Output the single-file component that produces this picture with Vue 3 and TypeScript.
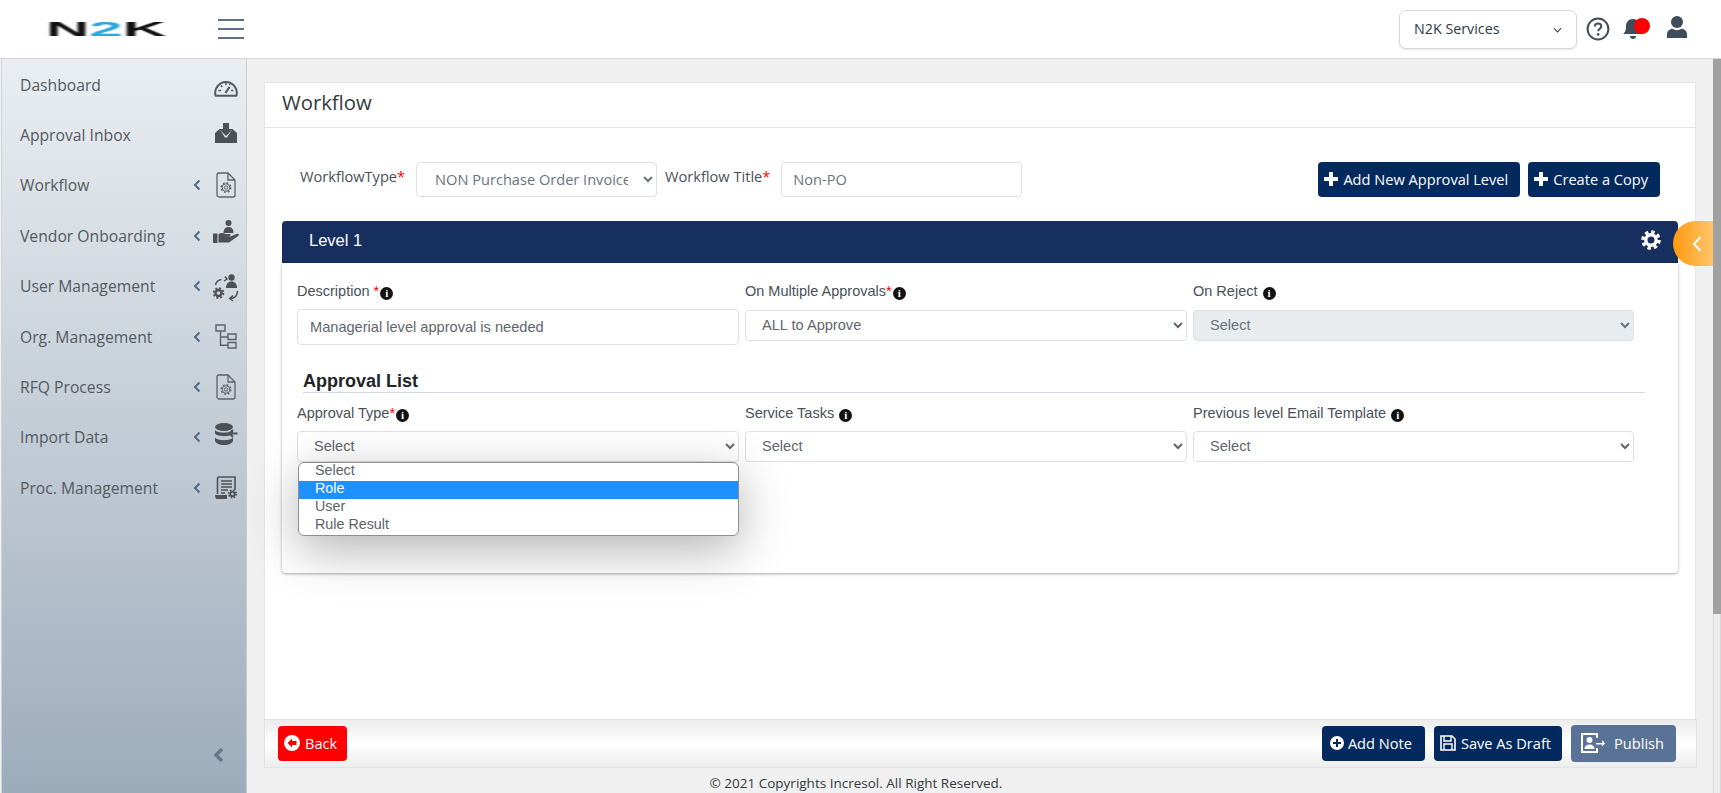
<script setup lang="ts">
interface NavItem {
  label: string
  icon: string
  arrow: boolean
}

const nav: NavItem[] = [
  { label: 'Dashboard', icon: 'gauge', arrow: false },
  { label: 'Approval Inbox', icon: 'inbox', arrow: false },
  { label: 'Workflow', icon: 'docgear', arrow: true },
  { label: 'Vendor Onboarding', icon: 'hand', arrow: true },
  { label: 'User Management', icon: 'users', arrow: true },
  { label: 'Org. Management', icon: 'tree', arrow: true },
  { label: 'RFQ Process', icon: 'docgear', arrow: true },
  { label: 'Import Data', icon: 'db', arrow: true },
  { label: 'Proc. Management', icon: 'scroll', arrow: true },
]

const approvalOptions = ['Select', 'Role', 'User', 'Rule Result']
</script>

<template>
  <div class="app">
    <header class="topbar">
      <div class="logo"><div class="logo-text"><span>N</span><span class="two">2</span><span>K</span></div></div>
      <div class="burger"><i></i><i></i><i></i></div>
      <div class="top-right">
        <div class="company-wrap">
          <select class="company">
            <option>N2K Services</option>
          </select>
          <svg class="company-chev" viewBox="0 0 10 6" width="9" height="6">
            <path d="M1 1l4 4 4-4" fill="none" stroke="#3f4c5a" stroke-width="1.300" />
          </svg>
        </div>
        <svg class="ic-help" viewBox="0 0 24 24" width="24" height="24">
          <circle cx="12" cy="12" r="10.400" fill="none" stroke="#3f4c5a" stroke-width="2" />
          <path d="M8.800 9.600c0-2 1.500-3.200 3.300-3.200s3.200 1.200 3.200 2.900c0 2.400-3.100 2.500-3.100 5" fill="none" stroke="#3f4c5a" stroke-width="2" />
          <circle cx="12.200" cy="17.400" r="1.300" fill="#3f4c5a" />
        </svg>
        <div class="bell">
          <svg viewBox="0 0 24 24" width="24" height="24">
            <path d="M12 2c-4.400 0-7 3.200-7 7.400 0 4.600-1.400 6-3 7.600h20c-1.600-1.600-3-3-3-7.600C19 5.200 16.400 2 12 2zM9 19c0 1.700 1.300 3 3 3s3-1.300 3-3z" fill="#3f4c5a" />
          </svg>
          <span class="dot"></span>
        </div>
        <svg class="ic-user" viewBox="0 0 24 24" width="24" height="24">
          <circle cx="12" cy="7" r="6" fill="#3f4c5a" />
          <path d="M2 23v-3.500C2 16 5 13.800 7.400 13.800c1.400.9 3 1.400 4.600 1.400s3.200-.5 4.600-1.400c2.400 0 5.400 2.200 5.400 5.700V23z" fill="#3f4c5a" />
        </svg>
      </div>
    </header>

    <div class="layout">
      <aside class="sidebar">
        <nav class="nav">
          <div v-for="item in nav" :key="item.label" class="nav-item">
            <span class="nav-label">{{ item.label }}</span>
            <svg v-if="item.arrow" class="nav-arrow" viewBox="0 0 8 12" width="8" height="12">
              <path d="M6.500 1.500 2 6l4.500 4.500" fill="none" stroke="#4f6a85" stroke-width="2" />
            </svg>
            <span class="nav-icon" :class="item.icon">
              <svg v-if="item.icon === 'gauge'" viewBox="0 0 24 19" width="24" height="19">
                <path d="M1.600 17.800a10.800 10.800 0 1 1 20.800 0z" fill="none" stroke="#55595e" stroke-width="2" stroke-linejoin="round" />
                <path d="M11.500 15l4-6" stroke="#55595e" stroke-width="2.200" />
                <path d="M4.500 12.500h2.500M6.800 7.500l1.600 1.400M12 4.800v2.400M17 12.500h2.500M16.200 6l-.8 1" stroke="#55595e" stroke-width="1.500" />
              </svg>
              <svg v-else-if="item.icon === 'inbox'" viewBox="0 0 22 20" width="22" height="20">
                <path d="M8 0h6v6h4l-7 7-7-7h4z" fill="#4d5156" />
                <path d="M0 10l4.500-4 5.500 8.500h2L17.500 6l4.500 4v10H0z" fill="#4d5156" />
              </svg>
              <svg v-else-if="item.icon === 'docgear'" viewBox="0 0 20 26" width="20" height="26">
                <path d="M1 3a2 2 0 0 1 2-2h9l7 7v15a2 2 0 0 1-2 2H3a2 2 0 0 1-2-2z" fill="none" stroke="#5d6167" stroke-width="1.300" />
                <path d="M12 1v7h7" fill="none" stroke="#5d6167" stroke-width="1.300" />
                <circle cx="10" cy="15.500" r="1.700" fill="none" stroke="#5d6167" stroke-width="1" />
                <circle cx="10" cy="15.500" r="3.800" fill="none" stroke="#5d6167" stroke-width="1" />
                <circle cx="10" cy="15.500" r="4.800" fill="none" stroke="#5d6167" stroke-width="1.400" stroke-dasharray="1.800 1.970" />
              </svg>
              <svg v-else-if="item.icon === 'hand'" viewBox="0 0 26 23" width="26" height="23">
                <circle cx="15.500" cy="3" r="3" fill="#4d5156" />
                <path d="M10.500 13c0-4 2-6 5-6s5 2 5 6z" fill="#4d5156" />
                <path d="M0 13.500h4.500V23H0zM5.500 14c3-1.500 5-1 7 0h4c1.500 0 1.500 2.200 0 2.200h-4l5 .2 6-2.400c2.200-.6 3 1 1.300 2.200L16 22.500H5.500z" fill="#4d5156" />
              </svg>
              <svg v-else-if="item.icon === 'users'" viewBox="0 0 26 28" width="26" height="28">
                <circle cx="18.500" cy="3.500" r="3.200" fill="#4d5156" />
                <path d="M13 14c0-4 2-6.500 5.500-6.500S24 10 24 14z" fill="#4d5156" />
                <circle cx="5.500" cy="19" r="3" fill="none" stroke="#4d5156" stroke-width="2.400" />
                <circle cx="5.500" cy="19" r="4.900" fill="none" stroke="#4d5156" stroke-width="1.800" stroke-dasharray="2 1.850" />
                <path d="M2.500 11c.6-3 2.500-5 6-5.500" fill="none" stroke="#4d5156" stroke-width="1.500" />
                <path d="M12 2.500l2 2.500-3 2" fill="none" stroke="#4d5156" stroke-width="1.500" />
                <path d="M24.500 17c0 4-2.500 7-7 7.500" fill="none" stroke="#4d5156" stroke-width="1.500" />
                <path d="M20 21.500l-3.300 3 3.300 2.500" fill="none" stroke="#4d5156" stroke-width="1.500" />
              </svg>
              <svg v-else-if="item.icon === 'tree'" viewBox="0 0 22 25" width="22" height="25">
                <path d="M1 1h9v6H1zM13 10h8v5.500h-8zM13 18.500h8V24h-8zM5.500 7v14.200H13M5.500 13H13" fill="none" stroke="#5d6167" stroke-width="1.400" />
              </svg>
              <svg v-else-if="item.icon === 'db'" viewBox="0 0 24 22" width="24" height="22">
                <ellipse cx="10" cy="4" rx="9" ry="4" fill="#4d5156" />
                <path d="M1 7c2 3.500 16 3.500 18 0v3.500c-2 3.500-16 3.500-18 0zM1 14.500c2 3.500 16 3.500 18 0V18c-2 5.500-16 5.500-18 0z" fill="#4d5156" />
                <path d="M23.500 10.500H15.500M19 7l-3.500 3.500L19 14" fill="none" stroke="#4d5156" stroke-width="1.900" />
              </svg>
              <svg v-else viewBox="0 0 24 23" width="24" height="23">
                <path d="M5 1h16v13M5 1c-1.500 0-1.500 1-1.500 2v15" fill="none" stroke="#4d5156" stroke-width="1.600" />
                <path d="M7 5h11M7 8h11M7 11h11M7 14h7M7 17h4" stroke="#4d5156" stroke-width="1.300" />
                <path d="M1 19h12v4H3c-1 0-2-1.500-2-4z" fill="#4d5156" />
                <circle cx="18.500" cy="18" r="2.200" fill="none" stroke="#4d5156" stroke-width="1.800" />
                <circle cx="18.500" cy="18" r="3.700" fill="none" stroke="#4d5156" stroke-width="1.600" stroke-dasharray="1.600 1.300" />
              </svg>
            </span>
          </div>
        </nav>
        <div class="collapse">
          <svg viewBox="0 0 12 16" width="12" height="16">
            <path d="M10 2 4 8l6 6" fill="none" stroke="#66778a" stroke-width="3.400" />
          </svg>
        </div>
      </aside>

      <main class="main">
        <section class="page">
          <h1 class="page-title">Workflow</h1>
          <div class="page-body">
            <div class="head-row">
              <label class="head-label">WorkflowType<em>*</em></label>
              <select class="ctl type-select">
                <option>NON Purchase Order Invoice</option>
              </select>
              <label class="head-label">Workflow Title<em>*</em></label>
              <input class="ctl title-input" value="Non-PO" />
              <div class="head-actions">
                <button class="btn">
                  <svg viewBox="0 0 14 14" width="14" height="14"><path d="M5 0h4v5h5v4H9v5H5V9H0V5h5z" fill="#fff" /></svg>
                  Add New Approval Level
                </button>
                <button class="btn">
                  <svg viewBox="0 0 14 14" width="14" height="14"><path d="M5 0h4v5h5v4H9v5H5V9H0V5h5z" fill="#fff" /></svg>
                  Create a Copy
                </button>
              </div>
            </div>

            <div class="level">
              <div class="level-bar">
                <span>Level 1</span>
                <svg viewBox="0 0 20 20" width="20" height="20">
                  <circle cx="10" cy="10" r="5.200" fill="none" stroke="#fff" stroke-width="3.400" />
                  <circle cx="10" cy="10" r="8" fill="none" stroke="#fff" stroke-width="3.600" stroke-dasharray="3.400 2.880" />
                </svg>
              </div>
              <div class="level-body">
                <div class="fields first">
                  <div class="field">
                    <label>Description <em>*</em><i class="info">i</i></label>
                    <input class="ctl desc" value="Managerial level approval is needed" />
                  </div>
                  <div class="field">
                    <label>On Multiple Approvals<em>*</em><i class="info">i</i></label>
                    <select class="ctl"><option>ALL to Approve</option></select>
                  </div>
                  <div class="field">
                    <label>On Reject <i class="info">i</i></label>
                    <select class="ctl" disabled><option>Select</option></select>
                  </div>
                </div>
                <h2 class="list-title">Approval List</h2>
                <div class="fields second">
                  <div class="field dropdown-host">
                    <label>Approval Type<em>*</em><i class="info">i</i></label>
                    <select class="ctl"><option>Select</option></select>
                    <ul class="dropdown">
                      <li v-for="opt in approvalOptions" :key="opt" :class="{ active: opt === 'Role' }">{{ opt }}</li>
                    </ul>
                  </div>
                  <div class="field">
                    <label>Service Tasks <i class="info">i</i></label>
                    <select class="ctl"><option>Select</option></select>
                  </div>
                  <div class="field">
                    <label>Previous level Email Template <i class="info">i</i></label>
                    <select class="ctl"><option>Select</option></select>
                  </div>
                </div>
              </div>
            </div>
          </div>
          <footer class="page-foot">
            <button class="btn back">
              <svg viewBox="0 0 16 16" width="16" height="16">
                <circle cx="8" cy="8" r="8" fill="#fff" />
                <path d="M8 3.500 3.500 8 8 12.500V10h4.500V6H8z" fill="#f00" />
              </svg>
              Back
            </button>
            <div class="foot-right">
              <button class="btn add-note">
                <svg viewBox="0 0 14 14" width="14" height="14">
                  <circle cx="7" cy="7" r="7" fill="#fff" />
                  <path d="M6 3h2v3h3v2H8v3H6V8H3V6h3z" fill="#032a5e" />
                </svg>
                Add Note
              </button>
              <button class="btn save">
                <svg viewBox="0 0 16 16" width="16" height="16">
                  <path d="M1 1h11l3 3v11H1z" fill="none" stroke="#fff" stroke-width="1.600" />
                  <path d="M4 1v5h7V1M4 15V9h8v6" fill="none" stroke="#fff" stroke-width="1.400" />
                </svg>
                Save As Draft
              </button>
              <button class="btn publish">
                <svg viewBox="0 0 24 20" width="24" height="20">
                  <path d="M16 5V1H1v18h15v-4" fill="none" stroke="#fff" stroke-width="2" />
                  <circle cx="8.500" cy="7" r="3" fill="#fff" />
                  <path d="M3.500 16c0-3 2-4.500 5-4.500s5 1.500 5 4.500z" fill="#fff" />
                  <path d="M15 10h6V7l3 3.500-3 3v-2h-6z" fill="#fff" />
                </svg>
                Publish
              </button>
            </div>
          </footer>
        </section>
        <p class="copyright">© 2021 Copyrights Incresol. All Right Reserved.</p>

        <div class="side-tab">
          <svg viewBox="0 0 12 18" width="12" height="18">
            <path d="M9.500 2 3 9l6.500 7" fill="none" stroke="#fff" stroke-width="2" />
          </svg>
        </div>
      </main>
      <div class="scrollbar"><div class="thumb"></div></div>
    </div>
  </div>
</template>

<style>
html,
body {
  margin: 0;
  height: 100%;
  overflow: hidden;
}
</style>

<style scoped>
.app {
  width: 1721px;
  height: 793px;
  display: flex;
  flex-direction: column;
  font-family: 'Open Sans', sans-serif;
  color: #495057;
  background: #f0f0f0;
  overflow: hidden;
}

.topbar {
  height: 58px;
  flex: none;
  display: flex;
  align-items: center;
  background: #fff;
  border-bottom: 1px solid #d6d6d6;
  padding-left: 46px;
  padding-right: 32px;
}

.logo {
  width: 122px;
  height: 20px;
}

.logo-text {
  width: 38px;
  font-family: 'Liberation Sans', sans-serif;
  font-weight: 700;
  font-size: 20px;
  line-height: 20px;
  color: #111;
  white-space: nowrap;
  transform: scaleX(3);
  transform-origin: left center;
  filter: blur(0.5px);
}

.logo .two {
  color: #2ea6e0;
}

.burger {
  margin-left: 50px;
  width: 26px;
  display: flex;
  flex-direction: column;
  gap: 7px;
}

.burger i {
  display: block;
  height: 2px;
  background: #5d7288;
}

.top-right {
  margin-left: auto;
  display: flex;
  align-items: center;
}

.company-wrap {
  position: relative;
  height: 39px;
}

.company {
  width: 178px;
  height: 39px;
  padding: 0 24px 2px 14px;
  appearance: none;
  font: 14.300px 'Open Sans', sans-serif;
  color: #2f3b47;
  background: #fff;
  border: 1px solid #d5d8dc;
  border-radius: 7px;
  box-shadow: 0 1px 2px rgba(0, 0, 0, 0.1);
}

.company-chev {
  position: absolute;
  right: 15px;
  top: 17px;
}

.ic-help {
  margin-left: 9px;
}

.bell {
  position: relative;
  margin-left: 11px;
  width: 28px;
  height: 24px;
}

.bell .dot {
  position: absolute;
  left: 13px;
  top: 1px;
  width: 16px;
  height: 16px;
  border-radius: 50%;
  background: #f00;
}

.ic-user {
  margin-left: 16px;
  margin-bottom: 5px;
}

.layout {
  flex: 1;
  display: flex;
  min-height: 0;
}

.sidebar {
  width: 246px;
  margin-left: 1px;
  flex: none;
  display: flex;
  flex-direction: column;
  background: linear-gradient(#eaeef2, #9dacbb);
  border-left: 1px solid #d2d6da;
  border-right: 1px solid #c8ccd1;
  box-sizing: border-box;
}

.nav {
  padding-top: 0.500px;
}

.nav-item {
  height: 50.400px;
  display: flex;
  align-items: center;
  padding-left: 18px;
  font-size: 15.700px;
  color: #54595f;
}

.nav-label {
  flex: 1;
  white-space: nowrap;
}

.nav-arrow {
  margin-right: 12px;
}

.nav-icon {
  width: 26px;
  margin-right: 7px;
  display: flex;
  justify-content: center;
}

.nav-icon.gauge {
  margin-top: 5px;
}

.nav-icon.inbox {
  margin-bottom: 4px;
}

.nav-icon.hand {
  margin-bottom: 9px;
}

.nav-icon.users {
  margin-top: 3px;
}

.nav-icon.db {
  margin-bottom: 6px;
}

.collapse {
  margin-top: auto;
  height: 46px;
  padding-left: 210px;
  display: flex;
  align-items: flex-start;
}

.main {
  position: relative;
  flex: 1;
  min-width: 0;
  padding: 23px 17px 0 17px;
  display: flex;
  flex-direction: column;
}

.page {
  height: 686px;
  flex: none;
  display: flex;
  flex-direction: column;
  background: #fff;
  border: 1px solid #e6e6e6;
  box-sizing: border-box;
}

.page-title {
  margin: 0;
  height: 44px;
  padding-left: 17px;
  font-size: 20.300px;
  font-weight: 400;
  line-height: 39px;
  color: #343a40;
  border-bottom: 1px solid #e3e3e3;
  box-sizing: content-box;
}

.page-body {
  flex: 1;
  padding: 34px 17px 0;
}

.head-row {
  display: flex;
  align-items: flex-start;
  height: 59px;
  padding-left: 18px;
}

.head-label {
  font-size: 14.600px;
  line-height: 19px;
  padding-top: 5px;
  color: #495057;
  white-space: nowrap;
}

.head-label em,
.field em {
  color: #f00;
  font-style: normal;
}

.ctl {
  height: 31px;
  box-sizing: border-box;
  background: #fff;
  border: 1px solid #dde1e6;
  border-radius: 4px;
  font: 14.600px 'Liberation Sans', sans-serif;
  color: #5f666d;
  padding: 0 12px;
  outline: none;
}

.type-select {
  width: 241px;
  height: 35px;
  margin-left: 11px;
  margin-right: 8px;
  padding: 0 12px 2px 14px;
  font: 14.600px 'Open Sans', sans-serif;
  color: #6b737b;
}

.title-input {
  width: 241px;
  height: 35px;
  margin-left: 11px;
  padding: 0 11px 2px;
  font: 14.600px 'Open Sans', sans-serif;
  color: #6b737b;
}

.head-actions {
  margin-left: auto;
  display: flex;
  gap: 8px;
  padding-right: 18px;
}

.btn {
  display: inline-flex;
  align-items: center;
  gap: 5px;
  height: 35px;
  padding: 0 12px 2px 6px;
  border: none;
  border-radius: 4px;
  background: #032a5e;
  color: #fff;
  font: 14.600px 'Open Sans', sans-serif;
  white-space: nowrap;
}

.level-bar {
  height: 42px;
  display: flex;
  align-items: center;
  justify-content: space-between;
  padding: 0 17px 4px 27px;
  box-sizing: border-box;
  background: #162f5f;
  border-radius: 4px 4px 0 0;
  color: #fff;
  font: 16.500px 'Liberation Sans', sans-serif;
}

.level-body {
  height: 310px;
  box-sizing: border-box;
  padding: 0 15px;
  border-radius: 0 0 4px 4px;
  box-shadow: 0 1px 3px rgba(0, 0, 0, 0.35);
  font-family: 'Liberation Sans', sans-serif;
}

.fields {
  display: grid;
  grid-template-columns: 442px 442px 441px;
  column-gap: 6px;
}

.fields.first {
  padding-top: 21px;
  height: 84px;
  box-sizing: content-box;
}

.fields.second {
  padding-top: 13px;
}

.field label {
  display: block;
  height: 25px;
  font-size: 14.500px;
  line-height: 15px;
  color: #495057;
}

.field .ctl {
  width: 100%;
}

.field select.ctl {
  height: 31px;
  margin-top: 1px;
  padding: 0 12px 1px;
}

.fields.second select.ctl {
  margin-top: 0;
}

.field .ctl.desc {
  height: 36px;
}

.field select:disabled {
  background: #e9ecef;
  opacity: 1;
  color: #6b737b;
}

.info {
  display: inline-block;
  width: 13px;
  height: 13px;
  margin-left: 1px;
  border-radius: 50%;
  background: #111;
  color: #fff;
  font: 700 11px/13px 'Liberation Serif', serif;
  text-align: center;
  vertical-align: -1px;
}

.list-title {
  margin: 0 18px 0 6px;
  height: 24px;
  font-size: 18px;
  line-height: 26px;
  font-weight: 700;
  color: #212529;
  border-bottom: 1px solid #d5dae0;
  box-sizing: content-box;
}

.dropdown-host {
  position: relative;
}

.dropdown {
  position: absolute;
  left: 1px;
  right: 0;
  top: 56px;
  margin: 0;
  padding: 0;
  list-style: none;
  background: #fff;
  border: 1px solid #8f8f8f;
  border-radius: 6px;
  overflow: hidden;
  box-shadow: 0 14px 50px rgba(0, 0, 0, 0.3);
  font-size: 14.300px;
  line-height: 14px;
  color: #5c6269;
  z-index: 3;
}

.dropdown li {
  height: 18px;
  padding-left: 16px;
}

.dropdown li.active {
  background: #1e90ff;
  color: #fff;
}

.page-foot {
  height: 49px;
  flex: none;
  display: flex;
  align-items: center;
  justify-content: space-between;
  padding: 0 20px 0 13px;
  margin: 0 -2px -1px -1px;
  border: 1px solid #dfe3e7;
  background: linear-gradient(#ececec, #ffffff 50%, #ededed);
  box-sizing: border-box;
}

.foot-right {
  display: flex;
  align-items: center;
  gap: 9px;
}

.back {
  background: #f00;
  padding: 0 10px 2px 6px;
  gap: 5px;
}

.add-note {
  padding: 0 13px 2px 8px;
  gap: 4px;
}

.save {
  padding: 0 11px 2px 6px;
}

.publish {
  height: 37px;
  background: #5a7295;
  gap: 9px;
  padding: 0 12px 2px 10px;
}

.copyright {
  margin: 0;
  padding-right: 248px;
  height: 30px;
  text-align: center;
  font-size: 13.500px;
  line-height: 30px;
  color: #33383d;
}

.side-tab {
  position: absolute;
  right: 0;
  top: 162px;
  width: 40px;
  height: 45px;
  padding-left: 8px;
  box-sizing: border-box;
  border-radius: 23px 0 0 23px;
  background: linear-gradient(90deg, #ff9a10, #ffc56b);
  display: flex;
  align-items: center;
  justify-content: center;
  z-index: 4;
}

.scrollbar {
  width: 8px;
  flex: none;
  box-sizing: border-box;
  background: #ededed;
  border-left: 1px solid #d8d8d8;
  border-right: 1px solid #d8d8d8;
}

.thumb {
  height: 555px;
  margin: 0 -1px;
  background: #a0a0a0;
}
</style>
